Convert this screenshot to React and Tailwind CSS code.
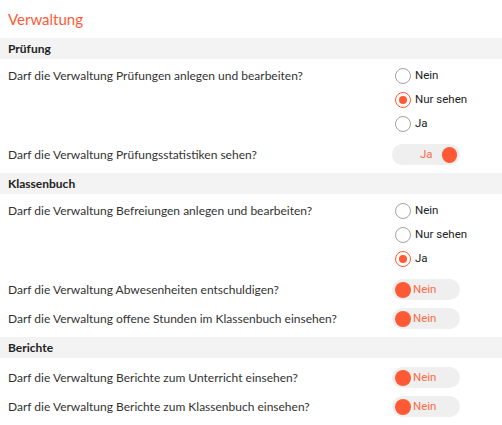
const sections = [
  {
    title: "Prüfung",
    rows: [
      { label: "Darf die Verwaltung Prüfungen anlegen und bearbeiten?", type: "radio", value: "Nur sehen" },
      { label: "Darf die Verwaltung Prüfungsstatistiken sehen?", type: "toggle", on: true },
    ],
  },
  {
    title: "Klassenbuch",
    rows: [
      { label: "Darf die Verwaltung Befreiungen anlegen und bearbeiten?", type: "radio", value: "Ja" },
      { label: "Darf die Verwaltung Abwesenheiten entschuldigen?", type: "toggle", on: false },
      { label: "Darf die Verwaltung offene Stunden im Klassenbuch einsehen?", type: "toggle", on: false },
    ],
  },
  {
    title: "Berichte",
    rows: [
      { label: "Darf die Verwaltung Berichte zum Unterricht einsehen?", type: "toggle", on: false },
      { label: "Darf die Verwaltung Berichte zum Klassenbuch einsehen?", type: "toggle", on: false },
    ],
  },
];

const options = ["Nein", "Nur sehen", "Ja"];

function Radio({ checked, label }) {
  return (
    <div className="flex h-4 items-center gap-[4px]">
      <span
        className={`flex h-4 w-4 items-center justify-center rounded-full border-[1.5px] bg-white ${
          checked ? "border-[#ff5a35]" : "border-[#a3a3a3]"
        }`}
      >
        {checked ? <span className="h-2 w-2 rounded-full bg-[#ff5a35]" /> : null}
      </span>
      <span className="font-['Roboto',sans-serif] text-[11.5px] text-[#222]">{label}</span>
    </div>
  );
}

function Toggle({ on }) {
  return (
    <div className="flex h-[21px] w-[68px] items-center rounded-full bg-[#efefef] px-[3px]">
      {on ? (
        <>
          <span className="ml-[25px] w-[24px] font-['Roboto',sans-serif] text-[11.5px] text-[#ff6a45]">Ja</span>
          <span className="h-4 w-4 rounded-full bg-[#ff5a35]" />
        </>
      ) : (
        <>
          <span className="h-4 w-4 rounded-full bg-[#ff5a35]" />
          <span className="ml-[2px] font-['Roboto',sans-serif] text-[11.5px] text-[#ff6a45]">Nein</span>
        </>
      )}
    </div>
  );
}

export default function App() {
  return (
    <div className="h-[425px] w-[502px] overflow-hidden bg-white font-['Lato',sans-serif] text-[#333]">
      <div className="flex h-[38px] items-center px-2">
        <h1 className="text-[15px] leading-none text-[#ff5a35]">Verwaltung</h1>
      </div>

      {sections.map((section) => (
        <section key={section.title}>
          <div className="flex h-[21px] items-center bg-[#f3f3f3] px-2">
            <h2 className="text-[12px] font-bold text-[#222]">{section.title}</h2>
          </div>
          <div className="pt-[5px] pb-1">
            {section.rows.map((row) =>
              row.type === "radio" ? (
                <div key={row.label} className="flex items-start pt-1 pb-2">
                  <p className="flex-1 pl-2 text-[12px] leading-4">{row.label}</p>
                  <div className="flex w-[110px] flex-col gap-2 pl-[3px]">
                    {options.map((opt) => (
                      <Radio key={opt} label={opt} checked={opt === row.value} />
                    ))}
                  </div>
                </div>
              ) : (
                <div key={row.label} className="flex items-center py-1">
                  <p className="flex-1 pl-2 text-[12px]">{row.label}</p>
                  <div className="w-[110px]">
                    <Toggle on={row.on} />
                  </div>
                </div>
              )
            )}
          </div>
        </section>
      ))}
    </div>
  );
}
